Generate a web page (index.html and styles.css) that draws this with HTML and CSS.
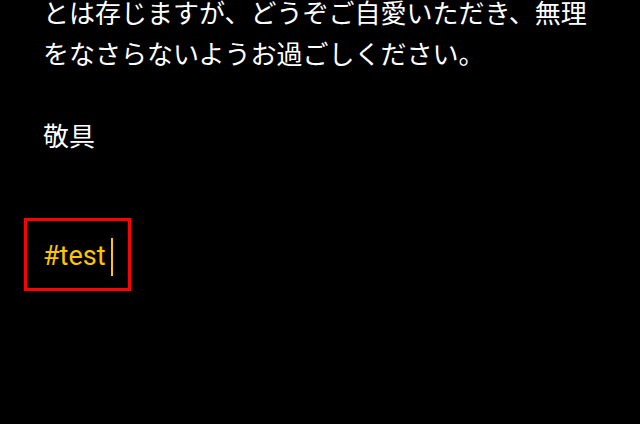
FILE: index.html
```html
<!DOCTYPE html>
<html lang="ja">
<head>
    <meta charset="UTF-8">
    <meta name="viewport" content="width=device-width, initial-scale=1.0">
    <title>メモ</title>
    <link rel="stylesheet" href="styles.css">
</head>
<body>
    <div class="note">
        <p class="line">とは存じますが、どうぞご自愛いただき、無理</p>
        <p class="line">をなさらないようお過ごしください。</p>
        <p class="line blank"></p>
        <p class="line">敬具</p>
        <div class="tag-row">
            <span class="tag-box">
                <span class="tag">#test</span>
                <span class="cursor"></span>
            </span>
        </div>
    </div>
</body>
</html>
```

FILE: styles.css
```css
html, body {
    background: #000;
}
body {
    margin: 0;
    font-family: 'Noto Sans CJK JP', 'Noto Sans', sans-serif;
    color: #fff;
    overflow: hidden;
}
.note {
    margin-top: -9px;
    padding-left: 43px;
}
.line {
    margin: 0;
    font-size: 26px;
    line-height: 41px;
    height: 41px;
    white-space: nowrap;
}
.tag-row {
    margin-top: 63px;
}
.tag-box {
    display: inline-flex;
    align-items: center;
    margin-left: -19px;
    padding: 15px 15px 11px 16px;
    border: 3px solid #ff0000;
}
.tag {
    font-family: Roboto, 'Noto Sans', sans-serif;
    font-size: 27px;
    line-height: 41px;
    color: #ffc500;
}
.cursor {
    display: inline-block;
    width: 2px;
    height: 38px;
    margin-left: 5px;
    background: #ffc500;
}
```
